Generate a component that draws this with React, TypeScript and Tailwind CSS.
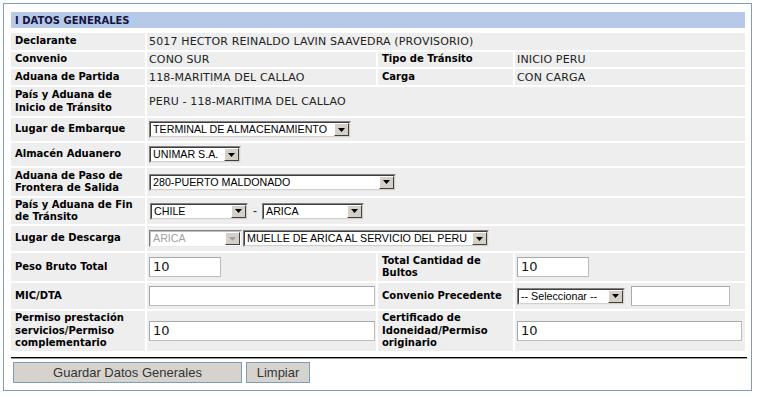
import React from 'react';

const label = "bg-[#eeeeee] pl-[4px] pr-[2px] align-middle text-[10px] leading-[12.5px] font-bold text-black";
const value = "bg-[#eeeeee] pl-[2px] align-middle text-[11px] leading-[13px] tracking-[0.15px] text-[#222]";

function Arrow({ disabled }: { disabled?: boolean }) {
  return (
    <span className="flex w-[15px] shrink-0 items-center justify-center border border-white border-b-[#404040] border-r-[#404040] bg-[#d4d0c8]">
      <svg width="7" height="4" viewBox="0 0 7 4">
        <path d="M0 0h7L3.5 4z" fill={disabled ? '#a0a0a0' : '#000'} />
      </svg>
    </span>
  );
}

function Select({ text, className, disabled }: { text: string; className: string; disabled?: boolean }) {
  return (
    <div className={`inline-flex h-[17px] align-middle border border-[#808080] border-b-[#e8e8e8] border-r-[#e8e8e8] ${className}`}>
      <div className={`flex flex-1 border ${disabled ? 'border-[#c0c0c0] border-b-white border-r-white' : 'border-[#404040] border-b-[#d4d0c8] border-r-[#d4d0c8]'} bg-white`}>
        <span className={`flex-1 overflow-hidden whitespace-nowrap pl-[2px] text-[10.7px] leading-[13px] tracking-normal font-['Liberation_Sans',Arial,sans-serif] ${disabled ? 'text-[#a0a0a0]' : 'text-black'}`}>
          {text}
        </span>
        <Arrow disabled={disabled} />
      </div>
    </div>
  );
}

function Input({ text, className }: { text?: string; className: string }) {
  return (
    <div className={`flex h-[20px] items-center border border-[#bcbcbc] border-t-[#a8a8a8] border-l-[#a8a8a8] bg-white pl-[3px] text-[13px] leading-[16px] tracking-normal text-[#111] ${className}`}>
      {text}
    </div>
  );
}

export default function App() {
  return (
    <div className="h-[397px] w-[758px] bg-white pt-[3px] pl-[3px] font-['DejaVu_Sans',Verdana,sans-serif]">
      <div className="h-[388px] w-[749px] border border-[#7f9db9] bg-white">
        <div className="ml-[7px] mt-[8px] h-[16px] w-[734px] bg-[#b6c9e9] pl-[4px] text-[10px] font-bold leading-[17px] text-[#14143c]">
          I DATOS GENERALES
        </div>
        <table className="ml-[5px] mt-[3px] w-[738px] table-fixed border-separate border-spacing-[2px]">
          <colgroup>
            <col className="w-[134px]" />
            <col className="w-[229px]" />
            <col className="w-[135px]" />
            <col className="w-[230px]" />
          </colgroup>
          <tbody>
            <tr className="h-[17px]">
              <td className={label}>Declarante</td>
              <td className={value} colSpan={3}>5017 HECTOR REINALDO LAVIN SAAVEDRA (PROVISORIO)</td>
            </tr>
            <tr className="h-[15px]">
              <td className={label}>Convenio</td>
              <td className={value}>CONO SUR</td>
              <td className={label}>Tipo de Tránsito</td>
              <td className={value}>INICIO PERU</td>
            </tr>
            <tr className="h-[16px]">
              <td className={label}>Aduana de Partida</td>
              <td className={value}>118-MARITIMA DEL CALLAO</td>
              <td className={label}>Carga</td>
              <td className={value}>CON CARGA</td>
            </tr>
            <tr className="h-[29px]">
              <td className={label}>País y Aduana de<br />Inicio de Tránsito</td>
              <td className={value} colSpan={3}>PERU - 118-MARITIMA DEL CALLAO</td>
            </tr>
            <tr className="h-[23px]">
              <td className={label}>Lugar de Embarque</td>
              <td className={value} colSpan={3}><Select text="TERMINAL DE ALMACENAMIENTO" className="w-[202px]" /></td>
            </tr>
            <tr className="h-[23px]">
              <td className={label}>Almacén Aduanero</td>
              <td className={value} colSpan={3}><Select text="UNIMAR S.A." className="w-[92px]" /></td>
            </tr>
            <tr className="h-[28px]">
              <td className={label}>Aduana de Paso de<br />Frontera de Salida</td>
              <td className={value} colSpan={3}><Select text="280-PUERTO MALDONADO" className="w-[247px]" /></td>
            </tr>
            <tr className="h-[26px]">
              <td className={label}>País y Aduana de Fin<br />de Tránsito</td>
              <td className={value} colSpan={3}>
                <div className="flex items-center">
                  <Select text="CHILE" className="ml-[1px] w-[98px]" />
                  <span className="w-[14px] text-center text-[12px] font-['Liberation_Sans',Arial,sans-serif]">-</span>
                  <Select text="ARICA" className="w-[102px]" />
                </div>
              </td>
            </tr>
            <tr className="h-[25px]">
              <td className={label}>Lugar de Descarga</td>
              <td className={value} colSpan={3}>
                <div className="flex items-center gap-[1px]">
                  <Select text="ARICA" className="w-[93px]" disabled />
                  <Select text="MUELLE DE ARICA AL SERVICIO DEL PERU" className="w-[246px]" />
                </div>
              </td>
            </tr>
            <tr className="h-[28px]">
              <td className={label}>Peso Bruto Total</td>
              <td className={value}><Input text="10" className="w-[72px]" /></td>
              <td className={label}>Total Cantidad de<br />Bultos</td>
              <td className={value}><Input text="10" className="w-[72px]" /></td>
            </tr>
            <tr className="h-[26px]">
              <td className={label}>MIC/DTA</td>
              <td className={value}><Input className="w-[226px]" /></td>
              <td className={label}>Convenio Precedente</td>
              <td className={value}>
                <div className="flex items-center gap-[6px]">
                  <Select text="-- Seleccionar --" className="w-[108px]" />
                  <Input className="w-[99px]" />
                </div>
              </td>
            </tr>
            <tr className="h-[40px]">
              <td className={label}>Permiso prestación<br />servicios/Permiso<br />complementario</td>
              <td className={value}><Input text="10" className="w-[226px]" /></td>
              <td className={label}>Certificado de<br />Idoneidad/Permiso<br />originario</td>
              <td className={value}><Input text="10" className="w-[225px]" /></td>
            </tr>
          </tbody>
        </table>
        <div className="ml-[7px] mt-[4px] h-[2px] w-[736px] border-t border-t-black border-b border-b-[#9a9a9a]" />
        <div className="ml-[9px] mt-[3px] flex gap-[4px] font-['Liberation_Sans',Arial,sans-serif] text-[13px] text-[#333]">
          <button className="h-[21px] w-[229px] border border-[#7f9db9] bg-[#d6d3ce] leading-[19px]">Guardar Datos Generales</button>
          <button className="h-[21px] w-[64px] border border-[#7f9db9] bg-[#d6d3ce] leading-[19px]">Limpiar</button>
        </div>
      </div>
    </div>
  );
}
